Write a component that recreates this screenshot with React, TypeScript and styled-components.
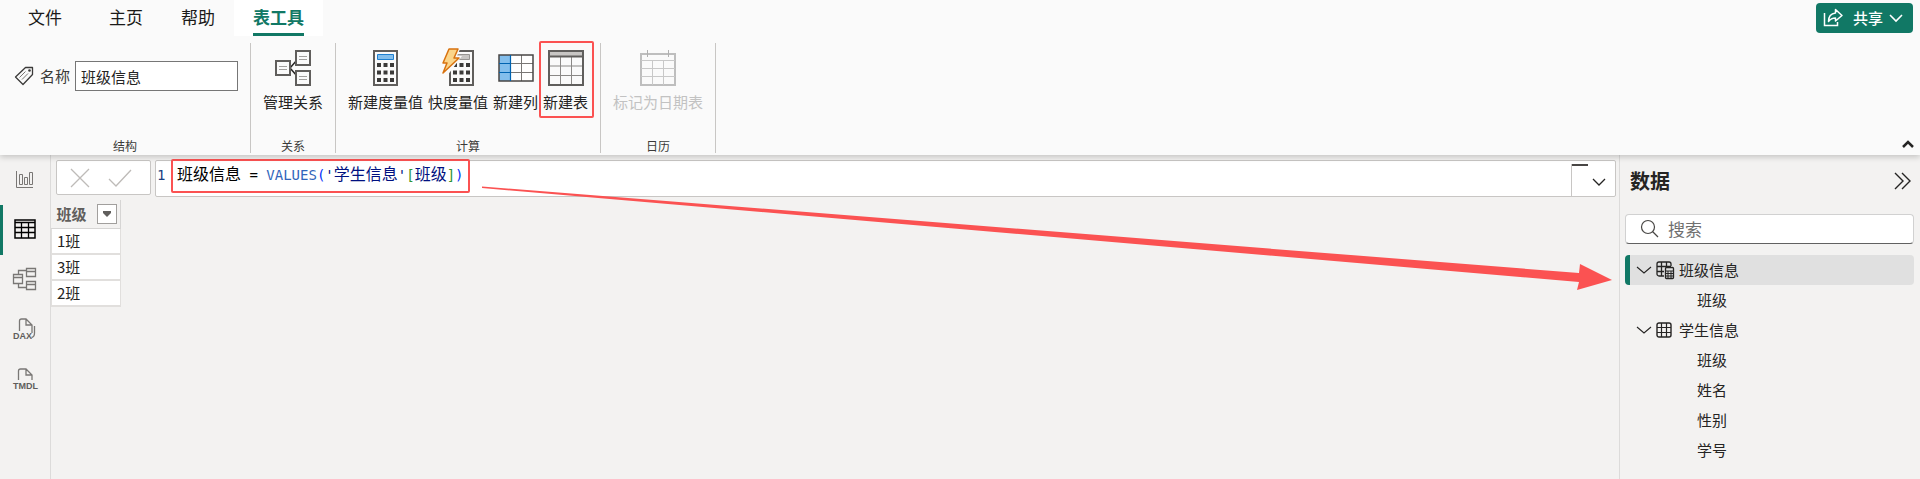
import React from 'react';
import styled, { createGlobalStyle, css } from 'styled-components';

const GlobalStyle = createGlobalStyle`
  *, *::before, *::after { box-sizing: border-box; }
  body {
    margin: 0;
    background: #f3f2f1;
    color: #252423;
    font-family: "Noto Sans CJK SC", "Noto Sans", sans-serif;
    font-size: 15px;
    line-height: 20px;
  }
  button, input { font: inherit; color: inherit; }
  button { margin: 0; padding: 0; border: 0; background: none; cursor: pointer; }
  svg { display: block; flex: none; }
`;

const Shell = styled.div`
  display: flex;
  flex-direction: column;
  min-height: 100vh;
`;

/* ---------- top ---------- */

const Top = styled.header`
  position: relative;
  z-index: 1;
  background: #fafafa;
  box-shadow: 0 2px 6px rgba(0, 0, 0, 0.2);
`;

const TabBar = styled.nav`
  display: flex;
  align-items: center;
  height: 36px;
  padding: 0 7px 0 9px;
`;

const Tab = styled.button<{ $active?: boolean; $first?: boolean }>`
  height: 36px;
  padding: 0 19px;
  margin-right: ${(p) => (p.$first ? 9 : 0)}px;
  font-size: 17px;
  color: #1b1a19;
  ${(p) =>
    p.$active &&
    css`
      background: #fff;
      color: #117865;
      font-weight: 700;
    `}
`;

const TabText = styled.span<{ $active?: boolean }>`
  display: block;
  height: 36px;
  padding-top: 5px;
  line-height: 24px;
  ${(p) =>
    p.$active &&
    css`
      background: linear-gradient(#117865, #117865) 0 33px / 100% 3px no-repeat;
    `}
`;

const ShareButton = styled.button`
  display: flex;
  align-items: center;
  gap: 10px;
  height: 30px;
  margin-left: auto;
  padding: 0 10px 0 7px;
  border-radius: 4px;
  background: #117865;
  color: #fff;
  font-weight: 500;
`;

const ShareText = styled.span`
  display: flex;
  align-items: center;
  gap: 6px;
`;

const Ribbon = styled.div`
  position: relative;
  display: flex;
  padding: 7px 0 2px;
`;

const Group = styled.section`
  display: flex;
  flex-direction: column;
  height: 110px;
  padding: 0 10px;
  border-right: 1px solid #c8c6c4;
`;

const Tools = styled.div`
  display: flex;
  flex: 1;
  gap: 1px;
  padding-top: 7px;
`;

const GroupName = styled.h2`
  margin: 0;
  font-size: 12px;
  line-height: 14px;
  font-weight: 400;
  text-align: center;
  color: #3b3a39;
`;

const Tool = styled.button`
  position: relative;
  display: flex;
  flex-direction: column;
  align-items: center;
  gap: 6px;
  height: 62px;
  padding: 0 2px;
  white-space: nowrap;
  &:disabled { color: #c2c2c2; cursor: default; }
`;

const Highlight = styled.span<{ $out: string }>`
  position: absolute;
  inset: ${(p) => p.$out};
  border: 2px solid #fb5252;
  border-radius: 2px;
  pointer-events: none;
`;

const NameField = styled.label`
  display: flex;
  align-items: center;
  gap: 5px;
  height: 30px;
  margin-top: 11px;
  padding: 0 2px 0 5px;
  color: #3b3a39;
`;

const NameInput = styled.input`
  width: 163px;
  height: 30px;
  padding: 0 5px;
  border: 1px solid #767676;
  border-radius: 0;
  background: #fff;
  color: #252423;
`;

const Collapse = styled.button`
  align-self: flex-end;
  margin: 0 6px 5px auto;
`;

/* ---------- body ---------- */

const Body = styled.div`
  display: flex;
  flex: 1;
`;

const Rail = styled.nav`
  display: flex;
  flex-direction: column;
  width: 51px;
  border-right: 1px solid #dcdbda;
`;

const RailButton = styled.button<{ $active?: boolean }>`
  display: flex;
  align-items: center;
  justify-content: center;
  height: 50px;
  border-left: 3px solid ${(p) => (p.$active ? '#117865' : 'transparent')};
  padding: 0 3px 2px 0;
`;

const Main = styled.main`
  position: relative;
  flex: 1;
  min-width: 0;
`;

const FormulaBar = styled.div`
  display: flex;
  align-items: flex-start;
  gap: 4px;
  padding: 5px 3px 0 5px;
`;

const FormulaActions = styled.div`
  display: flex;
  align-items: center;
  gap: 18px;
  height: 35px;
  padding: 0 18px 0 13px;
  border: 1px solid #c8c6c4;
  border-radius: 2px;
  background: #fff;
`;

const Editor = styled.div`
  display: flex;
  flex: 1;
  height: 37px;
  border: 1px solid #c8c6c4;
  border-radius: 2px;
  background: #fff;
`;

const LineNumber = styled.span`
  width: 21px;
  padding: 4px 0 0 1px;
  font-family: "DejaVu Sans Mono", monospace;
  font-size: 14px;
  color: #1b3f7f;
`;

const Code = styled.code`
  position: relative;
  height: 28px;
  padding-top: 4px;
  font-family: "DejaVu Sans Mono", "Noto Sans CJK SC", monospace;
  font-size: 14px;
  line-height: 20px;
  white-space: pre;
  color: #000;
`;

const Token = styled.span<{ $color?: string; $han?: boolean }>`
  color: ${(p) => p.$color ?? '#000'};
  font-size: ${(p) => (p.$han ? 16 : 14)}px;
`;

const Expand = styled.button`
  display: flex;
  align-items: flex-start;
  width: 44px;
  margin: 3px 0 0 auto;
  border-left: 1px solid #c8c6c4;
`;

const Grid = styled.table`
  margin: 3px 0 0;
  border-collapse: collapse;
`;

const HeadCell = styled.th`
  width: 69px;
  height: 28px;
  padding: 0 3px 0 5px;
  border-right: 1px solid #d6d5d4;
  border-bottom: 1px solid #d6d5d4;
  color: #605e5c;
  font-weight: 700;
`;

const HeadContent = styled.div`
  display: flex;
  align-items: center;
  justify-content: space-between;
`;

const FilterButton = styled.button`
  display: flex;
  align-items: center;
  justify-content: center;
  width: 20px;
  height: 20px;
  border: 1px solid #a19f9d;
  background: #fff;
`;

const Cell = styled.td`
  height: 26px;
  padding: 0 5px;
  border: 1px solid #e1dfdd;
  border-bottom-width: 2px;
  background: #fff;
`;

const Arrow = styled.svg`
  position: absolute;
  top: 31px;
  left: 431px;
  width: calc(100% - 438px);
  height: 105px;
  pointer-events: none;
`;

/* ---------- data pane ---------- */

const Pane = styled.aside`
  width: 301px;
  padding: 0 6px 0 5px;
  border-left: 1px solid #dcdbda;
`;

const PaneHead = styled.div`
  display: flex;
  align-items: center;
  justify-content: space-between;
  height: 51px;
  padding: 0 2px 0 5px;
`;

const PaneTitle = styled.h1`
  margin: 0;
  font-size: 20px;
  line-height: 28px;
  font-weight: 700;
`;

const Search = styled.label`
  display: flex;
  align-items: center;
  gap: 8px;
  height: 30px;
  margin-top: 8px;
  padding: 0 14px;
  border: 1px solid #d1d1d1;
  border-bottom-color: #616161;
  border-radius: 4px;
  background: #fff;
`;

const SearchInput = styled.input`
  flex: 1;
  min-width: 0;
  padding: 0;
  border: 0;
  outline: 0;
  background: none;
  font-size: 17px;
  &::placeholder { color: #707070; opacity: 1; }
`;

const Tree = styled.ul`
  margin: 11px 0 0;
  padding: 0;
  list-style: none;
`;

const TableRow = styled.button<{ $selected?: boolean }>`
  display: flex;
  align-items: center;
  width: 100%;
  height: 30px;
  padding-left: 6px;
  border-left: 5px solid ${(p) => (p.$selected ? '#117865' : 'transparent')};
  border-radius: 4px;
  background: ${(p) => (p.$selected ? '#e0e0e0' : 'none')};
`;

const TreeIcon = styled.span`
  width: 23px;
  margin-left: 4px;
`;

const Fields = styled.ul`
  margin: 0;
  padding: 0;
  list-style: none;
`;

const Field = styled.li`
  height: 30px;
  padding-left: 72px;
  line-height: 30px;
`;

/* ---------- icons ---------- */

const IconSvg = styled.svg`
  overflow: visible;
`;

const Svg = ({ w, h, children }: { w: number; h: number; children: React.ReactNode }) => (
  <IconSvg width={w} height={h} viewBox={`0 0 ${w} ${h}`} fill="none" aria-hidden="true">
    {children}
  </IconSvg>
);

const TagIcon = () => (
  <Svg w={20} h={20}>
    <path d="M10.500 1.500H17.500V8.500L8 18.500 .5 11Z" stroke="#3b3a39" strokeWidth="1.300" strokeLinejoin="round" />
    <circle cx="14.500" cy="4.500" r="1.300" fill="#3b3a39" />
    <path d="M4.500 11.500 10.500 5.500M7 13.500 13 7.500" stroke="#797775" />
  </Svg>
);

const RelationsIcon = () => (
  <Svg w={36} h={36}>
    <path d="M15 18 22 10M15 18 22 26" stroke="#252423" strokeWidth="1.500" />
    <g fill="#fafafa" stroke="#605e5c" strokeWidth="2">
      <path d="M1 11h14v14H1zM21 1h14v14H21zM21 21h14v14H21z" />
    </g>
    <path d="M4 16.500h8M4 19.500h8M24 6.500h8M24 9.500h8M24 26.500h8M24 29.500h8" stroke="#a19f9d" />
  </Svg>
);

const CalcBody = ({ screen, edge }: { screen: string; edge: string }) => (
  <>
    <path d="M1 1h23v34H1z" fill="#fafafa" stroke="#605e5c" strokeWidth="2" />
    <path d="M4.500 4.500h16v5h-16z" fill={screen} stroke={edge} />
    <path d="M4 15h17M4 22.500h17M4 30h17" stroke="#3b3a39" strokeWidth="4" strokeDasharray="4 2.500" />
  </>
);

const MeasureIcon = () => (
  <Svg w={25} h={36}>
    <CalcBody screen="#83beec" edge="#1e7fd0" />
  </Svg>
);

const QuickIcon = () => (
  <Svg w={32} h={36}>
    <g transform="translate(7 0)">
      <CalcBody screen="#c8c6c4" edge="#979593" />
    </g>
    <path d="M6-3h13l-4 9h5L5 26H-1V8Z" fill="#fafafa" />
    <path d="M7-1h9l-4 9h5L1 23l4-10H1Z" fill="#fbd58a" stroke="#d8720f" strokeWidth="1.500" strokeLinejoin="round" />
  </Svg>
);

const ColumnIcon = () => (
  <Svg w={36} h={36}>
    <path d="M1 5h34v26H1z" fill="#fff" />
    <path d="M1 5h11v26H1z" fill="#83beec" />
    <path d="M12 13.500h23M12 22.500h23M23.500 5v26" stroke="#797775" />
    <path d="M1 5h34v26H1z" stroke="#484644" strokeWidth="1.500" />
    <path d="M1 13.500h11M1 22.500h11M12.500 5v26" stroke="#0063b1" strokeWidth="1.200" />
  </Svg>
);

const NewTableIcon = () => (
  <Svg w={36} h={36}>
    <path d="M1 1h34v34H1z" fill="#fafafa" />
    <path d="M2 2h32v4H2z" fill="#c8c6c4" />
    <path d="M1 16h34M1 25.500h34M12.500 6v29M23.500 6v29" stroke="#8a8886" />
    <path d="M1 1h34v34H1zM1 6.500h34" stroke="#605e5c" strokeWidth="2" />
  </Svg>
);

const CalendarIcon = () => (
  <Svg w={36} h={36}>
    <path d="M1 4h34v31H1z" stroke="#bebebe" strokeWidth="2" />
    <path d="M1 10.500h34M1 18.500h34M1 26.500h34M12.500 10v25M23.500 10v25" stroke="#c8c8c8" />
    <path d="M7.500 0v7M28.500 0v7" stroke="#b0b0b0" />
  </Svg>
);

const ShareIcon = () => (
  <Svg w={20} h={20}>
    <path d="M1.500 5v12.500h13V14" stroke="#fff" strokeWidth="1.500" />
    <path d="M12.500 1.500 19 7.500 12.500 13v-3c-3 0-5 .8-7 3.500C5.500 8.500 8.500 5.500 12.500 5Z" stroke="#fff" strokeWidth="1.500" strokeLinejoin="round" />
  </Svg>
);

const Chevron = ({ w = 14, color = '#252423', up = false, thick = 1.3 }: { w?: number; color?: string; up?: boolean; thick?: number }) => (
  <Svg w={w} h={8}>
    <path d={up ? `M1 7 ${w / 2} 2 ${w - 1} 7` : `M1 1 ${w / 2} 7 ${w - 1} 1`} stroke={color} strokeWidth={thick} />
  </Svg>
);

const ReportIcon = () => (
  <Svg w={18} h={18}>
    <path d="M.5 1v16.500H17M3.500 4.500h3v10h-3zM8.500 7.500h3v7h-3zM13.500 2.500h3v12h-3z" stroke="#797775" />
  </Svg>
);

const TableViewIcon = () => (
  <Svg w={22} h={20}>
    <path d="M1 1h20v18H1z" stroke="#000" strokeWidth="1.500" />
    <path d="M1 3.500h20M1 8.500h20M1 13.500h20M7.500 4v15M14.500 4v15" stroke="#000" strokeWidth="1.300" />
  </Svg>
);

const ModelIcon = () => (
  <Svg w={24} h={24}>
    <path d="M.5 7.500h9v9h-9zM.5 10.500h9M13.500 1.500h9v8h-9zM13.500 4.500h9M13.500 14.500h9v8h-9zM13.500 17.500h9M5.500 7V3.500h8M5.500 17v3.500h8" stroke="#797775" strokeWidth="1.300" />
  </Svg>
);

const Letters = styled.text`
  fill: #605e5c;
  font-family: "Liberation Sans", sans-serif;
  font-size: 9px;
  font-weight: 700;
`;

const DaxIcon = () => (
  <Svg w={24} h={24}>
    <path d="M6.500 14V4Q6.500 2 8.500 2H13l6 6v8M13 2v6h6M21.500 9v7Q21.500 20 18.500 20.500" stroke="#797775" strokeWidth="1.300" />
    <Letters x="0" y="22">DAX</Letters>
  </Svg>
);

const TmdlIcon = () => (
  <Svg w={24} h={24}>
    <path d="M5.500 13V4Q5.500 2 7.500 2H13l6 6v5M13 2v6h6" stroke="#797775" strokeWidth="1.300" />
    <Letters x="0" y="22">TMDL</Letters>
  </Svg>
);

const CancelIcon = () => (
  <Svg w={20} h={20}>
    <path d="M1 1 19 19M19 1 1 19" stroke="#bebbb8" strokeWidth="1.300" />
  </Svg>
);

const CommitIcon = () => (
  <Svg w={24} h={20}>
    <path d="M1 11 8 18 23 2" stroke="#bebbb8" strokeWidth="1.300" />
  </Svg>
);

const ExpandIcon = () => (
  <Svg w={36} h={24}>
    <path d="M0 1h16" stroke="#484644" strokeWidth="2" />
    <path d="M21 15l6 6 6-6" stroke="#252423" strokeWidth="1.300" />
  </Svg>
);

const FilterIcon = () => (
  <Svg w={8} h={6}>
    <path d="M0 0h8v2L4 6 0 2Z" fill="#605e5c" />
  </Svg>
);

const DoubleChevron = () => (
  <Svg w={18} h={18}>
    <path d="M1 1l8 8-8 8M8 1l8 8-8 8" stroke="#252423" strokeWidth="1.400" />
  </Svg>
);

const SearchIcon = () => (
  <Svg w={20} h={20}>
    <circle cx="8" cy="8" r="6.500" stroke="#484644" strokeWidth="1.200" />
    <path d="M12.500 12.500 18 18" stroke="#484644" strokeWidth="1.300" />
  </Svg>
);

const GridIcon = () => (
  <Svg w={17} h={17}>
    <rect x="1" y="1" width="14" height="14" rx="2" stroke="#252423" strokeWidth="1.400" />
    <path d="M5.500 1v14M10.500 1v14M1 5.500h14M1 10.500h14" stroke="#252423" strokeWidth="1.200" />
  </Svg>
);

const CalcTableIcon = () => (
  <Svg w={19} h={19}>
    <path d="M8 15H3a2 2 0 0 1-2-2V3a2 2 0 0 1 2-2h10a2 2 0 0 1 2 2v2M5.500 1v14M10.500 1v4M1 5.500h14M1 10.500h7" stroke="#252423" strokeWidth="1.300" />
    <rect x="9.500" y="6.500" width="8" height="11" rx="1" fill="#e0e0e0" stroke="#252423" strokeWidth="1.300" />
    <path d="M9 10h9M9 12.500h9M9 15h9M12 10v8M15 10v8" stroke="#252423" />
  </Svg>
);

/* ---------- page ---------- */

const tables = [
  { name: '班级信息', icon: <CalcTableIcon />, selected: true, fields: ['班级'] },
  { name: '学生信息', icon: <GridIcon />, selected: false, fields: ['班级', '姓名', '性别', '学号'] },
];

const views = [
  { name: '报表视图', icon: <ReportIcon /> },
  { name: '表格视图', icon: <TableViewIcon />, active: true },
  { name: '模型视图', icon: <ModelIcon /> },
  { name: 'DAX 查询视图', icon: <DaxIcon /> },
  { name: 'TMDL 视图', icon: <TmdlIcon /> },
];

const menu = ['文件', '主页', '帮助'];

export default function App() {
  return (
    <Shell>
      <GlobalStyle />
      <Top>
        <TabBar>
          {menu.map((name, i) => (
            <Tab key={name} $first={i === 0}>
              <TabText>{name}</TabText>
            </Tab>
          ))}
          <Tab $active>
            <TabText $active>表工具</TabText>
          </Tab>
          <ShareButton>
            <ShareIcon />
            <ShareText>
              共享
              <Chevron color="#fff" thick={1.6} />
            </ShareText>
          </ShareButton>
        </TabBar>
        <Ribbon>
          <Group>
            <Tools>
              <NameField>
                <TagIcon />
                名称
                <NameInput defaultValue="班级信息" />
              </NameField>
            </Tools>
            <GroupName>结构</GroupName>
          </Group>
          <Group>
            <Tools>
              <Tool><RelationsIcon />管理关系</Tool>
            </Tools>
            <GroupName>关系</GroupName>
          </Group>
          <Group>
            <Tools>
              <Tool><MeasureIcon />新建度量值</Tool>
              <Tool><QuickIcon />快度量值</Tool>
              <Tool><ColumnIcon />新建列</Tool>
              <Tool>
                <NewTableIcon />
                新建表
                <Highlight $out="-9px -4px -6px -2px" />
              </Tool>
            </Tools>
            <GroupName>计算</GroupName>
          </Group>
          <Group>
            <Tools>
              <Tool disabled><CalendarIcon />标记为日期表</Tool>
            </Tools>
            <GroupName>日历</GroupName>
          </Group>
          <Collapse aria-label="折叠功能区"><Chevron w={12} up thick={2.5} /></Collapse>
        </Ribbon>
      </Top>
      <Body>
        <Rail>
          {views.map((v) => (
            <RailButton key={v.name} aria-label={v.name} $active={v.active}>{v.icon}</RailButton>
          ))}
        </Rail>
        <Main>
          <FormulaBar>
            <FormulaActions>
              <button aria-label="取消"><CancelIcon /></button>
              <button aria-label="提交"><CommitIcon /></button>
            </FormulaActions>
            <Editor>
              <LineNumber>1</LineNumber>
              <Code>
                <Token $han>班级信息</Token>
                <Token>{' = '}</Token>
                <Token $color="#3165bb">VALUES</Token>
                <Token $color="#0431fa">(</Token>
                <Token $color="#001080">'</Token>
                <Token $color="#001080" $han>学生信息</Token>
                <Token $color="#001080">'</Token>
                <Token $color="#319331">[</Token>
                <Token $color="#001080" $han>班级</Token>
                <Token $color="#319331">]</Token>
                <Token $color="#0431fa">)</Token>
                <Highlight $out="-2px -6px -4px -6px" />
              </Code>
              <Expand aria-label="展开编辑栏"><ExpandIcon /></Expand>
            </Editor>
          </FormulaBar>
          <Grid>
            <thead>
              <tr>
                <HeadCell>
                  <HeadContent>
                    班级
                    <FilterButton aria-label="筛选"><FilterIcon /></FilterButton>
                  </HeadContent>
                </HeadCell>
              </tr>
            </thead>
            <tbody>
              {['1班', '3班', '2班'].map((v) => (
                <tr key={v}><Cell>{v}</Cell></tr>
              ))}
            </tbody>
          </Grid>
          <Arrow viewBox="0 0 1130 105" preserveAspectRatio="none" aria-hidden="true">
            <path d="M0 0.500 1097 87 1098 78 1130 94 1095 104 1097 96 0 2Z" fill="#fb5252" />
          </Arrow>
        </Main>
        <Pane>
          <PaneHead>
            <PaneTitle>数据</PaneTitle>
            <button aria-label="折叠窗格"><DoubleChevron /></button>
          </PaneHead>
          <Search>
            <SearchIcon />
            <SearchInput placeholder="搜索" aria-label="搜索" />
          </Search>
          <Tree>
            {tables.map((t) => (
              <li key={t.name}>
                <TableRow $selected={t.selected}>
                  <Chevron w={16} thick={1.1} />
                  <TreeIcon>{t.icon}</TreeIcon>
                  {t.name}
                </TableRow>
                <Fields>
                  {t.fields.map((f) => <Field key={f}>{f}</Field>)}
                </Fields>
              </li>
            ))}
          </Tree>
        </Pane>
      </Body>
    </Shell>
  );
}
